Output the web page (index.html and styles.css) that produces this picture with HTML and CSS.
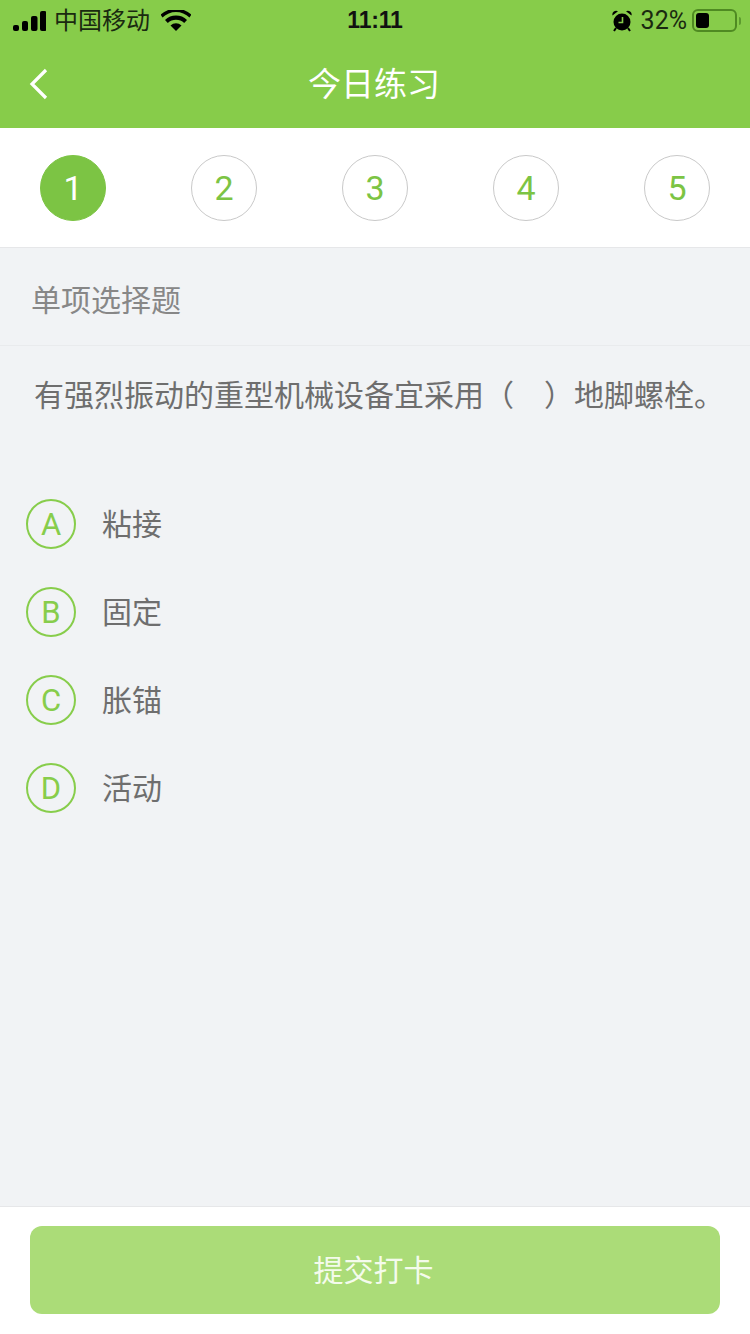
FILE: index.html
```html
<!DOCTYPE html>
<html lang="zh">
<head>
<meta charset="utf-8">
<title>今日练习</title>
<link rel="stylesheet" href="styles.css">
</head>
<body>
<div class="page">
  <header class="top">
    <div class="status">
      <div class="status-left">
        <svg class="signal" width="33" height="20" viewBox="0 0 33 20"><rect x="0" y="14" width="6" height="6" rx="2"/><rect x="9" y="10" width="6" height="10" rx="2"/><rect x="18" y="5" width="6.500" height="15" rx="2"/><rect x="27" y="0" width="6.500" height="20" rx="2"/></svg>
        <span class="carrier">中国移动</span>
        <svg class="wifi" width="30" height="21" viewBox="0 0 30 21"><path d="M15 21l-5.500-5.600a8 8 0 0 1 11 0z"/><path d="M6.800 13a11.800 11.800 0 0 1 16.400 0l2.800-3a16 16 0 0 0-22 0z"/><path d="M1.500 7.500a19.500 19.500 0 0 1 27 0L30.500 4.600a23 23 0 0 0-31 0z"/></svg>
      </div>
      <div class="time">11:11</div>
      <div class="status-right">
        <svg class="alarm" width="20" height="22" viewBox="0 0 20 22"><circle cx="10" cy="12" r="8.500"/><path d="M0.500 5.500a3.800 3.800 0 0 1 5.500-4.300zM19.500 5.500a3.800 3.800 0 0 0-5.500-4.300z"/><path d="M4 18l-2 3M16 18l2 3" stroke="#000" stroke-width="2" fill="none"/><path d="M10.500 7v5.500H6.500" stroke="#87cd4b" stroke-width="1.600" fill="none"/></svg>
        <span class="percent">32%</span>
        <span class="battery"><span class="battery-fill"></span></span>
        <span class="battery-tip"></span>
      </div>
    </div>
    <div class="nav">
      <svg class="back" width="22" height="32" viewBox="0 0 22 32"><path d="M18 2L4 16l14 14" fill="none" stroke="#fff" stroke-width="3.200"/></svg>
      <h1 class="nav-title">今日练习</h1>
    </div>
  </header>

  <nav class="steps">
    <span class="step step-on">1</span>
    <span class="step">2</span>
    <span class="step">3</span>
    <span class="step">4</span>
    <span class="step">5</span>
  </nav>

  <main class="main">
    <div class="kind">单项选择题</div>
    <p class="question">有强烈振动的重型机械设备宜采用（　）地脚螺栓。</p>
    <ul class="options">
      <li class="option"><span class="letter">A</span><span class="answer">粘接</span></li>
      <li class="option"><span class="letter">B</span><span class="answer">固定</span></li>
      <li class="option"><span class="letter">C</span><span class="answer">胀锚</span></li>
      <li class="option"><span class="letter">D</span><span class="answer">活动</span></li>
    </ul>
  </main>

  <footer class="foot">
    <button class="submit" type="button">提交打卡</button>
  </footer>
</div>
</body>
</html>
```
FILE: styles.css
```css
* { box-sizing: border-box; }
html, body { margin: 0; padding: 0; }
body {
  font-family: "Liberation Sans", "Noto Sans CJK SC", sans-serif;
  background: #f1f3f5;
}
.page {
  width: 750px;
  height: 1334px;
  display: flex;
  flex-direction: column;
  overflow: hidden;
}
.top {
  height: 128px;
  background: #87cc4a;
  flex: none;
}
.status {
  height: 40px;
  padding-top: 1px;
  display: grid;
  grid-template-columns: 1fr auto 1fr;
  align-items: center;
  color: #000;
  font-size: 24px;
}
.status-left {
  display: flex;
  align-items: center;
  padding-left: 13px;
}
.signal { fill: #000; margin-right: 8px; }
.carrier { line-height: 28px; color: #1a2a10; }
.wifi { fill: #000; margin-left: 11px; }
.time { font-size: 23px; font-weight: 700; letter-spacing: -0.2px; color: #111; }
.status-right {
  display: flex;
  align-items: center;
  justify-content: flex-end;
  padding-right: 9px;
}
.alarm { fill: #000; margin-right: 9px; }
.percent { margin-right: 5px; color: #1a2a10; font-size: 25px; font-family: "Roboto", "Liberation Sans", sans-serif; font-weight: 400; }
.battery {
  width: 45px;
  height: 23px;
  border: 2px solid #4f8a22;
  border-radius: 6px;
  padding: 2px;
  display: flex;
}
.battery-fill {
  width: 13px;
  background: #000;
  border-radius: 3px;
}
.battery-tip {
  width: 2px;
  height: 8px;
  margin-left: 2px;
  background: #5c9a2e;
  border-radius: 0 2px 2px 0;
}
.nav {
  height: 88px;
  position: relative;
  display: flex;
  align-items: center;
  justify-content: center;
}
.back {
  position: absolute;
  left: 28px;
  top: 28px;
}
.nav-title {
  margin: 2px 0 0 -2px;
  font-size: 33px;
  font-weight: 400;
  color: #fff;
  line-height: 86px;
}
.steps {
  flex: none;
  height: 120px;
  padding: 27px 40px 0;
  background: #fff;
  border-bottom: 1px solid #e6e7e9;
  display: flex;
  justify-content: space-between;
  align-items: flex-start;
}
.step {
  width: 66px;
  height: 66px;
  border: 1px solid #c9c9c9;
  border-radius: 50%;
  display: flex;
  align-items: center;
  justify-content: center;
  font-family: "Roboto", "Liberation Sans", sans-serif;
  font-weight: 400;
  font-size: 34px;
  color: #7cc444;
}
.step-on {
  background: #7cc444;
  border-color: #7cc444;
  color: #fff;
}
.main {
  flex: 1;
  min-height: 0;
}
.kind {
  height: 98px;
  padding-left: 31px;
  border-bottom: 1px solid #e9ebed;
  font-size: 30px;
  line-height: 106px;
  color: #878787;
}
.question {
  margin: 0;
  padding: 29px 0 0 34px;
  font-size: 30px;
  line-height: 42px;
  color: #6e6e6e;
  white-space: nowrap;
}
.options {
  list-style: none;
  margin: 82px 0 0;
  padding: 0 0 0 26px;
  display: flex;
  flex-direction: column;
  gap: 38px;
}
.option {
  display: flex;
  align-items: center;
  height: 50px;
}
.letter {
  width: 50px;
  height: 50px;
  border: 2px solid #87cd4b;
  border-radius: 50%;
  display: flex;
  align-items: center;
  justify-content: center;
  font-family: "Roboto", "Liberation Sans", sans-serif;
  font-weight: 400;
  font-size: 31px;
  color: #87cd4b;
  flex: none;
}
.answer {
  margin-left: 26px;
  padding-bottom: 4px;
  font-size: 30px;
  color: #6e6e6e;
}
.foot {
  flex: none;
  height: 128px;
  background: #fff;
  border-top: 1px solid #e6e7e9;
  padding: 19px 30px 0;
}
.submit {
  display: block;
  width: 100%;
  height: 88px;
  border: 0;
  border-radius: 12px;
  background: #abdc78;
  color: #f4fbec;
  font-family: inherit;
  font-size: 30px;
  padding: 0 3px 4px 0;
}
```
